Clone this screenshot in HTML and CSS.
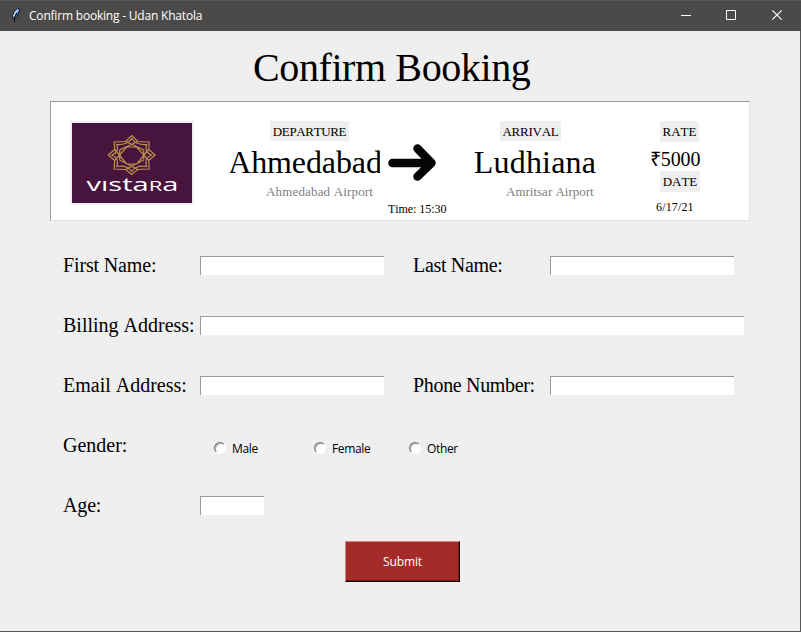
FILE: index.html
```html
<!DOCTYPE html>
<html lang="en">
<head>
<meta charset="utf-8">
<title>Confirm booking - Udan Khatola</title>
<link rel="stylesheet" href="styles.css">
</head>
<body>
<div class="window">
  <header class="titlebar">
    <svg class="feather" width="16" height="16" viewBox="0 0 16 16"><path d="M4.500 11 Q4.500 5 11 1.200 Q12 2 11 5.500 Q9.500 10 6.500 12Z" fill="#5b98dc" stroke="#0b0d12"/><path d="M5.500 9.500 Q6.500 5 10 2.500" stroke="#dcefff" stroke-width="1.200" fill="none"/><path d="M8.800 6 L6.500 11 L6.500 15" stroke="#050505" stroke-width="1.100" fill="none"/></svg>
    <span class="caption">Confirm booking - Udan Khatola</span>
    <svg class="controls" width="120" height="30" viewBox="0 0 120 30" fill="none" stroke="#fff"><path d="M10 14.500H20M55.500 9.500H64.500V18.500H55.500Z"/><path d="M101.300 9.300L110.700 18.700M110.700 9.300L101.300 18.700" stroke-width="1.200"/></svg>
  </header>
  <main>
    <h1>Confirm Booking</h1>
    <section class="ticket">
      <svg class="logo" width="120" height="80" viewBox="0 0 120 80">
        <rect width="120" height="80" fill="#47143d"/>
        <g fill="none" stroke="#bd924b" stroke-width="1.200" transform="translate(59.700 32)">
          <path d="M0-19.500 L6-13.500 L17.500-13 L17-5.500 L23.500 0 L17 5.500 L17.500 14 L6 14.500 L0 19.500 L-6 14.500 L-17.500 14 L-17 5.500 L-23.500 0 L-17-5.500 L-17.500-13 L-6-13.500Z"/>
          <path d="M0-16.500 Q4-10 15-10.500 Q12-3 20 0 Q12 3 15 11.500 Q4 10 0 16.500 Q-4 10-15 11.500 Q-12 3-20 0 Q-12-3-15-10.500 Q-4-10 0-16.500Z"/>
          <path d="M-6-13.500 L12-5 L12 5 L-6 14.500 M6-13.500 L-12-5 L-12 5 L6 14.500 M-17-5.500 L-5 9 L5 9 L17-5.500 M-17 5.500 L-5-8 L5-8 L17 5.500"/>
        </g>
        <text class="wordmark" transform="translate(14.500 68)" textLength="92" lengthAdjust="spacingAndGlyphs">vısta<tspan class="small-cap">R</tspan>a</text>
      </svg>
      <div class="place">
        <span class="chip departure">DEPARTURE</span>
        <span class="city ahmedabad">Ahmedabad</span>
        <span class="airport">Ahmedabad Airport</span>
      </div>
      <div class="journey">
        <svg width="50" height="40" viewBox="0 0 50 40" fill="none" stroke="#050505" stroke-width="8.500" stroke-linecap="round" stroke-linejoin="round"><path d="M4.500 20H40M29.500 5.500L43.500 20L29.500 33.500"/></svg>
        <span class="time">Time: 15:30</span>
      </div>
      <div class="place">
        <span class="chip arrival">ARRIVAL</span>
        <span class="city ludhiana">Ludhiana</span>
        <span class="airport amritsar">Amritsar Airport</span>
      </div>
      <div class="fare">
        <span class="chip rate">RATE</span>
        <span class="price">₹5000</span>
        <span class="chip date-label">DATE</span>
        <span class="date">6/17/21</span>
      </div>
    </section>
    <form>
      <div class="row"><label for="first" class="first">First Name:</label><input id="first"><label for="last" class="second">Last Name:</label><input id="last"></div>
      <div class="row"><label for="billing">Billing Address:</label><input id="billing" class="wide"></div>
      <div class="row"><label for="email">Email Address:</label><input id="email"><label for="phone" class="second">Phone Number:</label><input id="phone"></div>
      <div class="row"><span class="label">Gender:</span>
        <div class="choices">
          <label><input type="radio" name="gender"><span>Male</span></label>
          <label><input type="radio" name="gender"><span>Female</span></label>
          <label><input type="radio" name="gender"><span>Other</span></label>
        </div>
      </div>
      <div class="row"><label for="age" class="first">Age:</label><input id="age" class="short"></div>
      <button type="button">Submit</button>
    </form>
  </main>
</div>
</body>
</html>
```
FILE: styles.css
```css
* { box-sizing: border-box; }
body { margin: 0; overflow: hidden; font-family: "Liberation Serif", serif; font-kerning: none; color: #000; }
.window { width: 801px; height: 632px; background: #efefef; border-right: 1px solid #595959; border-bottom: 1px solid #595959; }
.titlebar { display: flex; align-items: center; width: 801px; height: 31px; background: #4c4a48; border-top: 1px solid #5c5a58; }
.feather { margin: -2px 0 0 8px; }
.caption { margin-left: 5px; color: #fff; font: 12px/16px "Open Sans", sans-serif; letter-spacing: -0.2px; white-space: nowrap; }
.controls { margin-left: auto; margin-right: 10px; }
main { display: flex; flex-direction: column; }
h1 { margin: 13px 0 0 253px; height: 57px; font-size: 40px; line-height: 48px; font-weight: 400; letter-spacing: -0.4px; white-space: nowrap; }
.ticket { display: flex; width: 700px; height: 120px; margin-left: 50px; padding: 19px 0 0 19px; background: #fff; border: 1px solid #999; border-right-color: #e3e3e3; border-bottom-color: #e3e3e3; }
.logo { box-sizing: content-box; flex: none; border: 2px solid #efefef; margin-right: 36px; }
.wordmark { font-family: "Open Sans", sans-serif; font-size: 19px; fill: #fff; }
.small-cap { font-size: 14.5px; }
.place { display: flex; flex-direction: column; width: 150px; }
.chip { height: 20px; background: #efefef; font-size: 13px; line-height: 21px; text-align: center; white-space: nowrap; }
.departure { width: 79px; margin-left: 40px; letter-spacing: -0.35px; }
.arrival { width: 61px; margin-left: 40px; letter-spacing: -0.25px; }
.city { height: 40px; margin-top: 1px; display: flex; justify-content: center; overflow: hidden; font-size: 32px; line-height: 40px; }
.ahmedabad { letter-spacing: -0.1px; }
.ludhiana { letter-spacing: 0.2px; }
.airport { margin: 2px 0 0 36px; color: #808080; font-size: 13px; line-height: 16px; letter-spacing: 0.16px; white-space: nowrap; }
.amritsar { margin-left: 46px; letter-spacing: 0; }
.journey { display: flex; flex-direction: column; width: 80px; padding: 22px 0 0 8px; }
.time { margin-top: 18px; font-size: 12px; line-height: 16px; letter-spacing: -0.05px; white-space: nowrap; }
.fare { display: flex; flex-direction: column; width: 60px; margin-left: 40px; }
.rate, .date-label { width: 39px; height: 21px; margin-left: 10px; }
.date-label { width: 40px; }
.price { height: 29px; font-size: 20px; line-height: 34px; letter-spacing: -0.15px; }
.date { margin: 7px 0 0 6px; font-size: 12px; line-height: 16px; letter-spacing: 0.15px; }
form { display: flex; flex-direction: column; padding: 20px 0 0 63px; }
.row { display: flex; height: 60px; font-size: 20px; line-height: 48px; white-space: nowrap; }
.row > label, .label { width: 137px; }
.row > .first { letter-spacing: -0.15px; }
.row input { width: 184px; height: 19px; margin: 15px 0 0; padding: 0; border: 0 solid #999; border-width: 1px 0 0 1px; background: #fff; outline: 0; }
.row > .second { margin-left: 29px; letter-spacing: -0.33px; }
.row .wide { width: 544px; }
.row .short { width: 64px; }
.choices { display: flex; font: 12px/16px "Open Sans", sans-serif; }
.choices label { display: flex; width: 100px; height: 16px; margin-top: 20px; padding-left: 14px; }
.choices label + label + label { margin-left: -5px; }
.choices span { margin-left: 6px; letter-spacing: -0.35px; }
.row .choices input { appearance: none; width: 12px; height: 12px; margin: 1px 0 0; border: 1px solid #777; border-right-color: #fff; border-bottom-color: #fff; border-radius: 50%; box-shadow: inset 1px 1px #aaa; }
button { width: 115px; height: 41px; margin: 0 0 0 282px; padding: 0; background: #a52a2a; color: #fff; border: 1px solid #d78181; border-right: 1px solid #000; border-bottom: 1px solid #000; box-shadow: inset -1px -1px #701c1c; font: 12px/16px "Open Sans", sans-serif; letter-spacing: -0.1px; }
```
